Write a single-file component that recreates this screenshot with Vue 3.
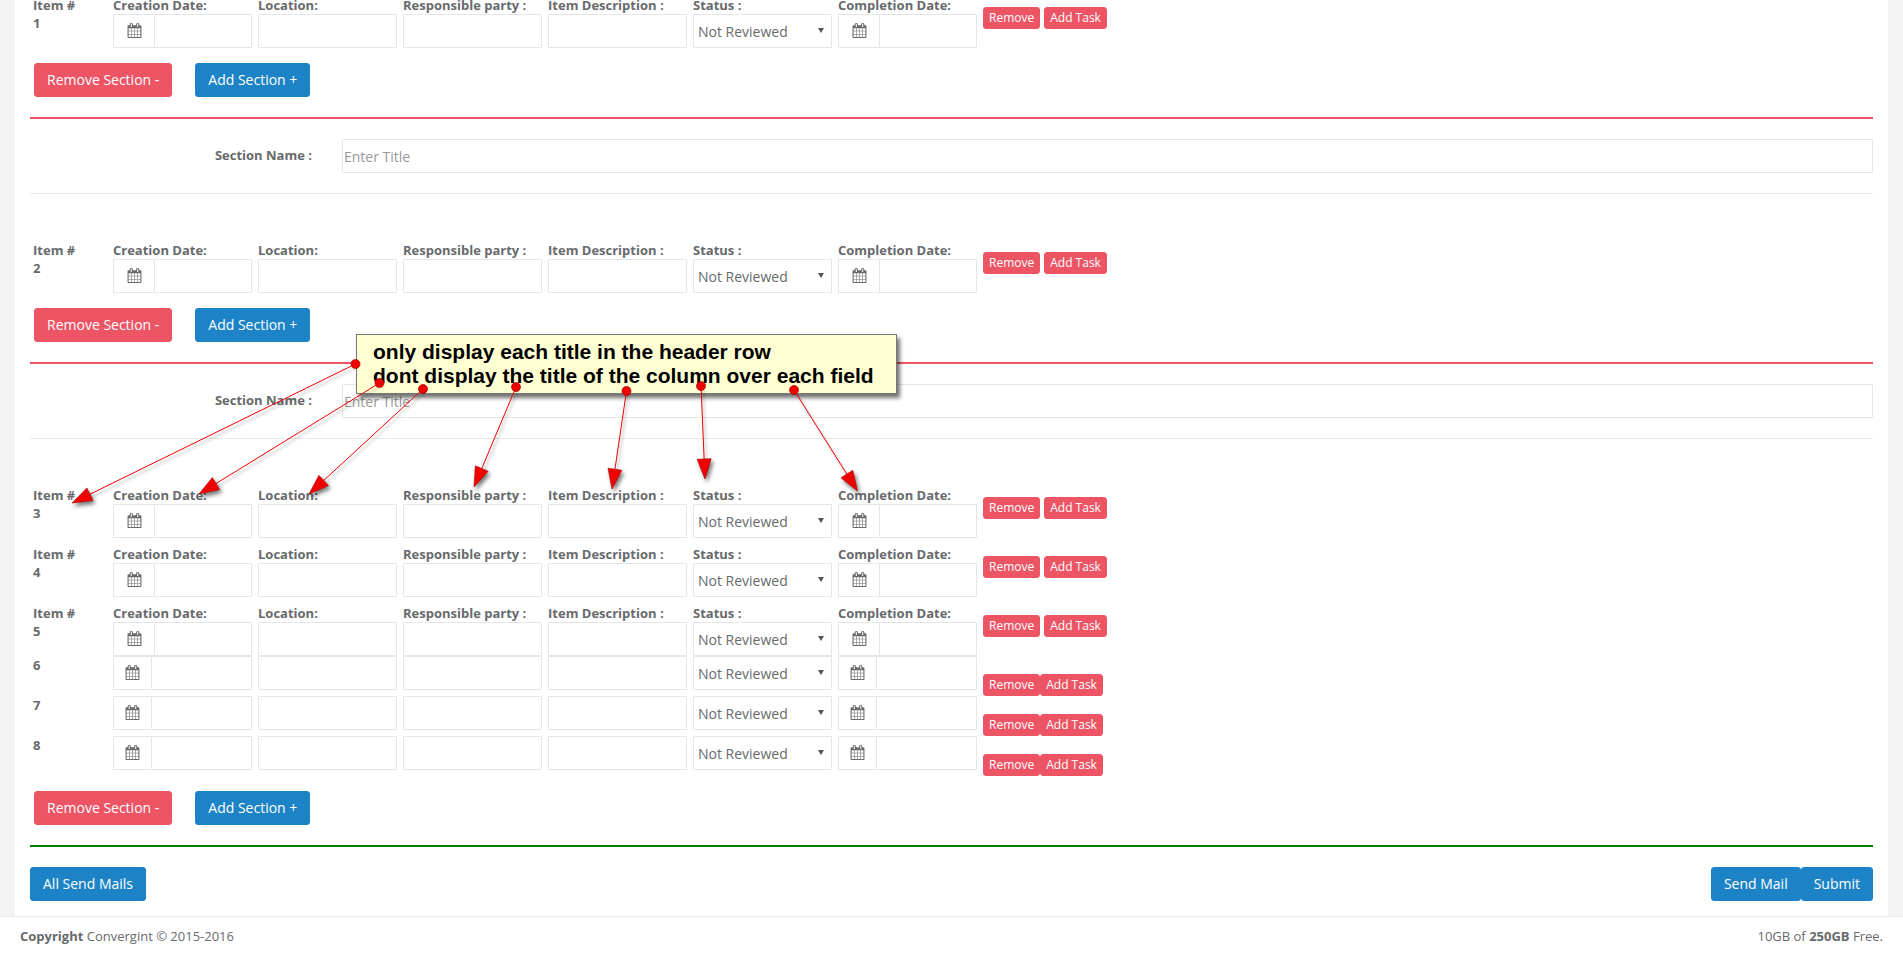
<script setup>
const fields = [
  { label: 'Creation Date:', kind: 'date' },
  { label: 'Location:', kind: 'text' },
  { label: 'Responsible party :', kind: 'text' },
  { label: 'Item Description :', kind: 'text' },
  { label: 'Status :', kind: 'select' },
  { label: 'Completion Date:', kind: 'date' },
]

const sections = [
  { named: false, rows: [{ n: 1, labeled: true }] },
  { named: true, rows: [{ n: 2, labeled: true }] },
  {
    named: true,
    rows: [
      { n: 3, labeled: true, spaced: true },
      { n: 4, labeled: true, spaced: true },
      { n: 5, labeled: true },
      { n: 6, labeled: false },
      { n: 7, labeled: false },
      { n: 8, labeled: false },
    ],
  },
]

const rawArrows = [
  [355.5, 364, 72, 503],
  [379.5, 383, 199, 494],
  [423, 389, 309, 494],
  [516, 387, 474, 487],
  [626.5, 391, 612, 489],
  [701, 386, 705, 479],
  [794, 390, 857.5, 491],
]

const arrows = rawArrows.map(([x1, y1, x2, y2]) => {
  const dx = x2 - x1
  const dy = y2 - y1
  const len = Math.hypot(dx, dy)
  const ux = dx / len
  const uy = dy / len
  const bx = x2 - ux * 20
  const by = y2 - uy * 20
  const hw = 7
  return {
    x1,
    y1,
    x2: bx,
    y2: by,
    head: `${x2},${y2} ${bx - uy * hw},${by + ux * hw} ${bx + uy * hw},${by - ux * hw}`,
  }
})

const calendarPath =
  'M192 1664h288v-288h-288v288zm352 0h320v-288h-320v288zm-352-352h288v-320h-288v320zm352 0h320v-320h-320v320zm-352-384h288v-288h-288v288zm736 736h320v-288h-320v288zm-384-736h320v-288h-320v288zm768 736h288v-288h-288v288zm-384-352h320v-320h-320v320zm-352-864v-288q0-13-9.5-22.5t-22.5-9.5h-64q-13 0-22.5 9.5t-9.5 22.5v288q0 13 9.5 22.5t22.5 9.5h64q13 0 22.5-9.5t9.5-22.5zm736 864h288v-320h-288v320zm-384-384h320v-288h-320v288zm384 0h288v-288h-288v288zm32-480v-288q0-13-9.5-22.5t-22.5-9.5h-64q-13 0-22.5 9.5t-9.5 22.5v288q0 13 9.5 22.5t22.5 9.5h64q13 0 22.5-9.5t9.5-22.5zm384-64v1280q0 52-38 90t-90 38h-1408q-52 0-90-38t-38-90v-1280q0-52 38-90t90-38h128v-96q0-66 47-113t113-47h64q66 0 113 47t47 113v96h384v-96q0-66 47-113t113-47h64q66 0 113 47t47 113v96h128q52 0 90 38t38 90z'
</script>

<template>
  <div class="page">
    <main class="gutter">
      <div class="panel">
        <section v-for="(section, si) in sections" :key="si" class="section">
          <template v-if="section.named">
            <div class="name-row">
              <label class="name-label">Section Name :</label>
              <input class="control name-input" type="text" placeholder="Enter Title" />
            </div>
            <div class="rule-light"></div>
          </template>

          <div class="rows">
            <div
              v-for="row in section.rows"
              :key="row.n"
              class="row"
              :class="{ spaced: row.spaced, bare: !row.labeled }"
            >
              <div class="item">
                <div v-if="row.labeled" class="cap">Item #</div>
                <div class="num">{{ row.n }}</div>
              </div>
              <div v-for="f in fields" :key="f.label" class="field">
                <div v-if="row.labeled" class="cap">{{ f.label }}</div>
                <div v-if="f.kind === 'date'" class="date">
                  <span class="addon">
                    <svg class="cal" viewBox="0 0 1792 1792"><path :d="calendarPath" /></svg>
                  </span>
                  <input class="control date-input" type="text" />
                </div>
                <div v-else-if="f.kind === 'select'" class="select-wrap">
                  <select class="control select">
                    <option>Not Reviewed</option>
                  </select>
                </div>
                <input v-else class="control" type="text" />
              </div>
              <div class="actions">
                <button class="btn btn-xs danger" type="button">Remove</button>
                <button class="btn btn-xs danger" type="button">Add Task</button>
              </div>
            </div>
          </div>

          <div class="section-buttons">
            <button class="btn danger" type="button">Remove Section -</button>
            <button class="btn primary" type="button">Add Section +</button>
          </div>
          <div class="rule" :class="si === sections.length - 1 ? 'green' : 'red'"></div>
        </section>

        <div class="bottom-bar">
          <button class="btn primary" type="button">All Send Mails</button>
          <div class="joined">
            <button class="btn primary" type="button">Send Mail</button>
            <button class="btn primary" type="button">Submit</button>
          </div>
        </div>
      </div>
    </main>

    <footer class="footer">
      <div><strong>Copyright</strong> Convergint © 2015-2016</div>
      <div>10GB of <strong>250GB</strong> Free.</div>
    </footer>

    <div class="note">
      <div>only display each title in the header row</div>
      <div>dont display the title of the column over each field</div>
    </div>
    <svg class="arrows" viewBox="0 0 1903 955" width="1903" height="955">
      <g v-for="(a, i) in arrows" :key="i">
        <line :x1="a.x1" :y1="a.y1" :x2="a.x2" :y2="a.y2" class="arrow-line" />
        <polygon :points="a.head" class="arrow-head" />
        <circle :cx="a.x1" :cy="a.y1" r="4.5" class="arrow-dot" />
      </g>
    </svg>
  </div>
</template>

<style>
html,
body {
  margin: 0;
  overflow: hidden;
}
</style>

<style scoped>
.page {
  position: relative;
  display: flex;
  flex-direction: column;
  height: 955px;
  overflow: hidden;
  font-family: "Open Sans", "Liberation Sans", sans-serif;
  font-size: 13px;
  color: #676a6c;
  background: #f3f3f4;
}
.gutter {
  flex: 1;
  min-height: 0;
  padding: 0 15px;
  overflow: hidden;
}
.panel {
  margin-top: -3px;
  padding: 0 15px 15px;
  background: #fff;
}
.name-row {
  display: flex;
  align-items: center;
  margin-bottom: 20px;
}
.name-label {
  flex: 0 0 282px;
  margin-right: 30px;
  margin-bottom: 2px;
  text-align: right;
  font-weight: 700;
}
.name-input {
  flex: 1;
}
.rule-light {
  height: 1px;
  margin-bottom: 48px;
  background: #e7eaec;
}
.rows {
  margin-bottom: 15px;
}
.row {
  display: grid;
  grid-template-columns: 80px repeat(6, 145px) auto;
  justify-content: start;
}
.row.spaced {
  margin-bottom: 8px;
}
.cap {
  height: 17px;
  line-height: 17px;
  font-weight: 700;
  white-space: nowrap;
}
.item {
  padding-left: 3px;
}
.num {
  line-height: 18px;
  font-weight: 700;
}
.field {
  padding: 0 3px;
}
.control {
  display: block;
  box-sizing: border-box;
  width: 100%;
  height: 34px;
  margin: 0;
  padding: 1px 4px;
  border: 1px solid #e5e6e7;
  border-radius: 1px;
  outline: none;
  background: #fff;
  font-family: inherit;
  font-size: 14px;
  color: #676a6c;
}
.name-input {
  padding: 1px;
  width: auto;
}
.name-input::placeholder {
  color: #999;
  opacity: 1;
}
.date {
  display: flex;
}
.addon {
  display: flex;
  flex: 0 0 41px;
  box-sizing: border-box;
  align-items: center;
  justify-content: center;
  height: 34px;
  padding-bottom: 2px;
  border: 1px solid #e5e6e7;
  border-right: 0;
  border-radius: 1px 0 0 1px;
}
.bare .addon {
  flex-basis: 38px;
}
.cal {
  width: 15px;
  height: 15px;
  fill: #676a6c;
}
.date-input {
  flex: 1;
  min-width: 0;
}
.select-wrap {
  position: relative;
}
.select-wrap::after {
  content: "";
  position: absolute;
  top: 14px;
  right: 8px;
  border-top: 5px solid #555;
  border-left: 3px solid transparent;
  border-right: 3px solid transparent;
  pointer-events: none;
}
.select {
  appearance: none;
  -webkit-appearance: none;
  padding-left: 4px;
}
.actions {
  display: flex;
  gap: 4px;
  align-items: flex-start;
  margin-top: 10px;
  padding-left: 3px;
}
.bare .actions {
  gap: 0;
  margin-top: 18px;
}
.btn {
  box-sizing: border-box;
  height: 34px;
  padding: 6px 12px;
  border: 1px solid transparent;
  border-radius: 3px;
  font-family: inherit;
  font-size: 14px;
  line-height: 20px;
  color: #fff;
  white-space: nowrap;
}
.btn-xs {
  height: 22px;
  padding: 1px 5px;
  font-size: 12px;
  line-height: 18px;
}
.danger {
  background: #ed5565;
  border-color: #ed5565;
}
.primary {
  background: #1c84c6;
  border-color: #1c84c6;
}
.section-buttons {
  display: flex;
  gap: 23px;
  margin-left: 4px;
}
.rule {
  height: 2px;
  margin: 20px 0;
}
.rule.red {
  background: #ed5565;
}
.rule.green {
  background: #008000;
}
.bottom-bar {
  display: flex;
  justify-content: space-between;
}
.joined {
  display: flex;
}
.footer {
  display: flex;
  flex: 0 0 39px;
  box-sizing: border-box;
  align-items: center;
  justify-content: space-between;
  padding: 0 20px;
  border-top: 1px solid #e7eaec;
  background: #fff;
}
.note {
  position: absolute;
  left: 356px;
  top: 334px;
  box-sizing: border-box;
  width: 541px;
  height: 60px;
  padding: 5px 0 0 16px;
  border: 1px solid #777;
  background: #ffffd2;
  box-shadow: 3px 4px 4px rgba(0, 0, 0, 0.55);
  font-family: "Liberation Sans", Arial, sans-serif;
  font-size: 21px;
  font-weight: 700;
  line-height: 24px;
  color: #000;
  white-space: nowrap;
}
.arrows {
  position: absolute;
  left: 0;
  top: 0;
  pointer-events: none;
  overflow: visible;
}
.arrow-line {
  stroke: #f00000;
  stroke-width: 1;
  filter: drop-shadow(2px 3px 1.5px rgba(0, 0, 0, 0.35));
}
.arrow-head {
  fill: #f00000;
  stroke: #b00000;
  stroke-width: 0.6;
  filter: drop-shadow(2px 3px 2px rgba(0, 0, 0, 0.55));
}
.arrow-dot {
  fill: #f00000;
  stroke: #a00000;
  stroke-width: 0.7;
}
</style>
